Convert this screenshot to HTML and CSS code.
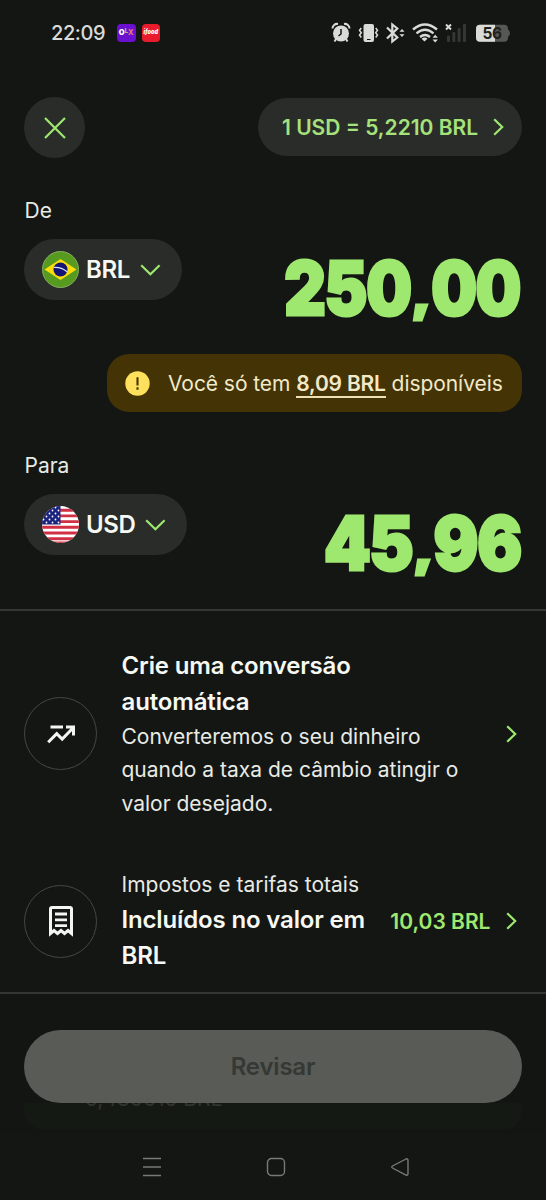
FILE: index.html
```html
<!DOCTYPE html>
<html lang="pt-BR">
<head>
<meta charset="utf-8">
<meta name="viewport" content="width=device-width, initial-scale=1">
<title>Converter</title>
<link rel="stylesheet" href="styles.css">
</head>
<body>
<div class="screen">
  <header class="status">
    <span class="clock">22:09</span>
    <span class="app app-olx"><b>O</b><i>L</i><em>X</em></span>
    <span class="app app-ifood">ifood</span>
    <svg class="status-icons" width="186" height="26" viewBox="330 20 186 26">
      <g fill="#d9dbd7">
        <circle cx="341" cy="33.500" r="8"/>
        <path d="M332.500 28.500a4.500 4.500 0 0 1 5.500-4.500M349.500 28.500a4.500 4.500 0 0 0-5.500-4.500" fill="none" stroke="#d9dbd7" stroke-width="2"/>
        <path d="M336 39l-1.500 2.500M346 39l1.500 2.500" stroke="#d9dbd7" stroke-width="2"/>
        <path d="M341 29v5l-2.500 2" fill="none" stroke="#141613" stroke-width="1.500"/>
        <rect x="363.500" y="24" width="10.500" height="18" rx="2"/>
        <path d="M367 39.500h3.500" stroke="#141613" stroke-width="1"/>
        <path d="M361.300 28l-1.800 2.300 1.800 2.400-1.800 2.300 1.800 2.500M375.700 28l1.800 2.300-1.800 2.400 1.800 2.300-1.800 2.500" fill="none" stroke="#d9dbd7" stroke-width="1.500"/>
        <path d="M387 27.500l10.300 10-5 4V24.500l5 4-10.300 10" fill="none" stroke="#d9dbd7" stroke-width="2.200"/>
        <path d="M399.500 31.800l2.500-2.800 2.500 2.800zM399.500 34.200l2.500 2.800 2.500-2.800z"/>
        <path d="M413 29.500q12-10 24 0M416.500 33.300q8.500-7 17 0M420 37q5-4 10 0" fill="none" stroke="#d9dbd7" stroke-width="2.300"/>
        <path d="M421.500 38.800q3.500-2.600 6 0l-3 2.800z"/>
        <path d="M432.500 37.800l2.700-3 2.700 3zM432.500 39.400l2.700 3 2.700-3z"/>
      </g>
      <path d="M446 24.500l5 5M451 24.500l-5 5" stroke="#d9dbd7" stroke-width="1.900"/>
      <g fill="#353733">
        <rect x="447" y="35.500" width="3" height="6.500" rx="1"/><rect x="452.300" y="32" width="3" height="10" rx="1"/>
        <rect x="457.600" y="28" width="3" height="14" rx="1"/><rect x="463" y="24" width="3" height="18" rx="1"/>
      </g>
      <path d="M480 24.700h24a4 4 0 0 1 4 4v9a4 4 0 0 1-4 4h-24a4 4 0 0 1-4-4v-9a4 4 0 0 1 4-4z" fill="#565855"/>
      <path d="M480 24.700h15v17h-15a4 4 0 0 1-4-4v-9a4 4 0 0 1 4-4z" fill="#d9dbd7"/>
      <path d="M508 29.500q2 1.500 2 3.700t-2 3.700z" fill="#565855"/>
      <text x="492" y="38.800" text-anchor="middle" class="battery">56</text>
    </svg>
  </header>

  <main>
    <div class="top">
      <button class="close" aria-label="Fechar"><svg width="24" height="24" viewBox="0 0 24 24"><path d="M2 2l20 20M22 2L2 22"/></svg></button>
      <button class="rate"><span class="t-rate">1 USD = 5,2210 BRL</span><svg width="11" height="18" viewBox="0 0 11 18"><path d="M1.200 1.200L9.200 9l-8 7.800"/></svg></button>
    </div>

    <section class="money">
      <div class="label">De</div>
      <div class="amount-row">
        <button class="currency">
          <svg width="37" height="37" viewBox="0 0 37 37">
            <circle cx="18.500" cy="18.500" r="18" fill="#579a20" stroke="#86ad60"/>
            <path d="M2.500 18.500L18.500 8l16 10.500-16 10.500z" fill="#fbdd0a"/>
            <circle cx="18.500" cy="18.500" r="7" fill="#141476"/>
            <path d="M12 16.500q7-.5 13 4.200" fill="none" stroke="#d8e4f4" stroke-width="1.200"/>
          </svg>
          <span class="code">BRL</span>
          <svg class="down" width="21" height="12" viewBox="0 0 21 12"><path d="M1.200 1.200l9.200 9 9.200-9"/></svg>
        </button>
        <div class="amount a-from"><span>250<i>,</i>00</span></div>
      </div>
    </section>

    <div class="notice">
      <svg width="25" height="25" viewBox="0 0 25 25"><circle cx="12.500" cy="12.500" r="12.200" fill="#ffe05c"/><path d="M12.500 6.300v8.300M12.500 16.300v2.400" stroke="#433305" stroke-width="2.100"/></svg>
      <span class="t-notice">Você só tem <b>8,09 BRL</b> disponíveis</span>
    </div>

    <section class="money">
      <div class="label">Para</div>
      <div class="amount-row">
        <button class="currency">
          <svg width="37" height="37" viewBox="0 0 37 37">
            <defs><clipPath id="round"><circle cx="18.500" cy="18.500" r="18.500"/></clipPath>
            <pattern id="stars" width="6" height="6" patternUnits="userSpaceOnUse"><circle cx="1.500" cy="1.500" r=".9" fill="#fff"/><circle cx="4.500" cy="4.500" r=".9" fill="#fff"/></pattern></defs>
            <g clip-path="url(#round)">
              <path fill="#fff" d="M0 0h37v37H0z"/>
              <path d="M0 4.200h37M0 9.900h37M0 15.600h37M0 21.300h37M0 27h37M0 32.700h37M0 37h37" stroke="#d02f44" stroke-width="2.900"/>
              <path fill="#1a237e" d="M0 0h18.500v18.500H0z"/><path fill="url(#stars)" d="M0 0h18v18H0z"/>
            </g>
          </svg>
          <span class="code">USD</span>
          <svg class="down" width="21" height="12" viewBox="0 0 21 12"><path d="M1.200 1.200l9.200 9 9.200-9"/></svg>
        </button>
        <div class="amount a-to"><span>45<i>,</i>96</span></div>
      </div>
    </section>

    <div class="list">
      <div class="item">
        <span class="avatar"><svg width="30" height="30" viewBox="0 0 30 30"><path d="M4.500 8h12.500M2.200 23.200l8.500-8.600 5.500 5.500L27 9M20 8h7.500v8.500" fill="none" stroke="#f3f5f0" stroke-width="3"/></svg></span>
        <div class="copy">
          <strong class="t-auto">Crie uma conversão<br>automática</strong>
          <span class="t-body">Converteremos o seu dinheiro<br>quando a taxa de câmbio atingir o<br>valor desejado.</span>
        </div>
        <svg class="chev" width="11" height="18" viewBox="0 0 11 18"><path d="M1.200 1.200L9.200 9l-8 7.800"/></svg>
      </div>
      <div class="item">
        <span class="avatar"><svg width="26" height="32" viewBox="0 0 26 32"><path d="M2.500 28.500V4q0-1.500 1.500-1.500h18q1.500 0 1.500 1.500v24.500l-3.500-3-3.500 3-3.500-3-3.500 3-3.500-3z" fill="none" stroke="#f3f5f0" stroke-width="3"/><path d="M7 9h12M7 14.800h12M7 20.600h12" stroke="#f3f5f0" stroke-width="2.800"/></svg></span>
        <div class="copy">
          <span class="t-body t-tax">Impostos e tarifas totais</span>
          <strong class="t-incl">Incluídos no valor em<br>BRL</strong>
        </div>
        <span class="fee">10,03 BRL</span>
        <svg class="chev" width="11" height="18" viewBox="0 0 11 18"><path d="M1.200 1.200L9.200 9l-8 7.800"/></svg>
      </div>
    </div>
  </main>

  <footer class="footer">
    <button class="review">Revisar</button>
    <div class="faded"><span>5,480615 BRL</span></div>
  </footer>
  <nav class="nav">
    <svg width="20" height="20" viewBox="0 0 20 20"><path d="M1 1.500h18M1 10h18M1 18.500h18"/></svg>
    <svg width="20" height="20" viewBox="0 0 20 20"><rect x="1.500" y="1.500" width="17" height="17" rx="4"/></svg>
    <svg width="20" height="20" viewBox="0 0 20 20"><path d="M16 2L2.500 9q-1.500 1 0 2L16 18q2 .8 2-1.500v-13Q18 1.200 16 2z"/></svg>
  </nav>
</div>
</body>
</html>
```
FILE: styles.css
```css
* { box-sizing: border-box; }
body { margin: 0; background: #141613; color: #e8eae5; font-family: Inter, "Noto Sans", sans-serif; }
button { border: 0; padding: 0; font: inherit; color: inherit; }
svg { display: block; flex: none; }
.screen { width: 546px; height: 1200px; overflow: hidden; display: flex; flex-direction: column; background: #141613; }
.status { height: 97px; display: flex; align-items: flex-start; padding: 20px 30px 0 51px; }
.clock { width: 66px; font-size: 20px; line-height: 26px; font-weight: 500; letter-spacing: -.4px; color: #d9dbd7; white-space: nowrap; }
.app { width: 18.500px; height: 18.500px; margin-top: 3.500px; border-radius: 4px; display: flex; justify-content: center; align-items: center; color: #fff; font-size: 7.500px; font-weight: 700; line-height: 1; }
.app-olx { background: #6b0fd0; margin-right: 6px; }
.app-olx i { font-style: normal; color: #9be75f; font-size: 6px; margin-top: -3px; }
.app-olx em { font-style: normal; color: #f28060; }
.app-ifood { background: #e81c2c; font-size: 5.500px; font-style: italic; font-weight: 900; }
.status-icons { margin-left: auto; }
.battery { font-family: Inter, sans-serif; font-size: 15.500px; font-weight: 700; letter-spacing: -.5px; fill: #1d1f1c; }
.top { display: flex; justify-content: space-between; align-items: center; padding: 0 24px; height: 61px; }
.close { width: 61px; height: 61px; border-radius: 50%; background: #2a2c29; display: grid; place-items: center; }
.close path, .rate path, .down path, .chev path { fill: none; stroke: #9fe870; stroke-width: 2.200; }
.rate { width: 264px; height: 58px; margin-bottom: 1px; border-radius: 29px; background: #2a2c29; color: #a5e27c; display: flex; align-items: center; justify-content: space-between; padding: 0 18px 0 24px; font-size: 21px; font-weight: 600; white-space: nowrap; }
.money { padding: 0 24px; }
.label { padding: 38px 0 0 .5px; height: 81px; font-size: 21px; line-height: 30px; }
.amount-row { display: flex; justify-content: space-between; height: 61px; }
.currency { height: 61px; border-radius: 31px; background: #2a2c29; display: flex; align-items: center; padding: 0 21px 0 18px; color: #f6f8f3; }
.code { font-size: 24px; font-weight: 600; letter-spacing: -.4px; margin: 0 10px 0 7px; }
.amount { display: flex; justify-content: flex-end; height: 98px; padding: 11px 1.500px 0 0; font-size: 74px; line-height: 76px; font-weight: 900; color: #9fe870; white-space: nowrap; }
.amount span { display: block; transform-origin: right center; transform: scaleX(.87); letter-spacing: -1.500px; -webkit-text-stroke: 3px #9fe870; }
.amount i { display: inline-block; font-style: normal; font-size: .62em; line-height: 1; margin: 0 4px 0 4px; transform: translateY(-5px) scaleX(1.3); }
.a-to span { transform: scaleX(.9); }
.notice { width: 415px; height: 58px; margin: 54px 24px 0 auto; border-radius: 22px; background: #433305; display: flex; align-items: center; gap: 18px; padding-left: 18px; font-size: 21px; letter-spacing: -.06px; color: #f2e9c9; white-space: nowrap; }
.notice b { font-weight: 600; letter-spacing: -.2px; border-bottom: 2px solid #eee0b5; }
.notice + .money .label { padding-top: 39px; height: 82px; }
.list { margin-top: 54px; height: 385px; border-top: 2px solid #343633; border-bottom: 2px solid #343633; padding: 36.500px 29.500px 0 24px; }
.item { display: flex; align-items: center; white-space: nowrap; }
.item + .item { margin-top: 48px; }
.avatar { width: 73px; height: 73px; border: 1.500px solid #454744; border-radius: 50%; display: grid; place-items: center; flex: none; margin-right: 24.500px; }
.copy { flex: 1; display: flex; flex-direction: column; }
.copy strong { font-size: 24px; line-height: 36px; font-weight: 600; letter-spacing: -.15px; color: #f6f8f3; }
.t-body { font-size: 21px; line-height: 33.500px; }
.copy .t-incl { line-height: 36.500px; }
.fee { font-size: 21px; font-weight: 600; color: #9fe870; margin-right: 15px; }
.footer { padding: 36px 24px 0; height: 140px; background: #131512; }
.review { display: block; width: 498px; height: 73px; border-radius: 37px; background: #595b57; color: #363834; font-size: 24px; font-weight: 600; letter-spacing: -.2px; }
.faded { height: 26px; overflow: hidden; padding-left: 61px; color: #30342d; font-size: 21px; line-height: 24px; background: #141913; border-radius: 0 0 18px 18px; }
.faded span { display: block; margin-top: -16px; }
.nav { display: flex; align-items: center; height: 65px; padding: 0 136px 0 142px; justify-content: space-between; }
.nav path, .nav rect { fill: none; stroke: #787a76; stroke-width: 1.400; }
```
